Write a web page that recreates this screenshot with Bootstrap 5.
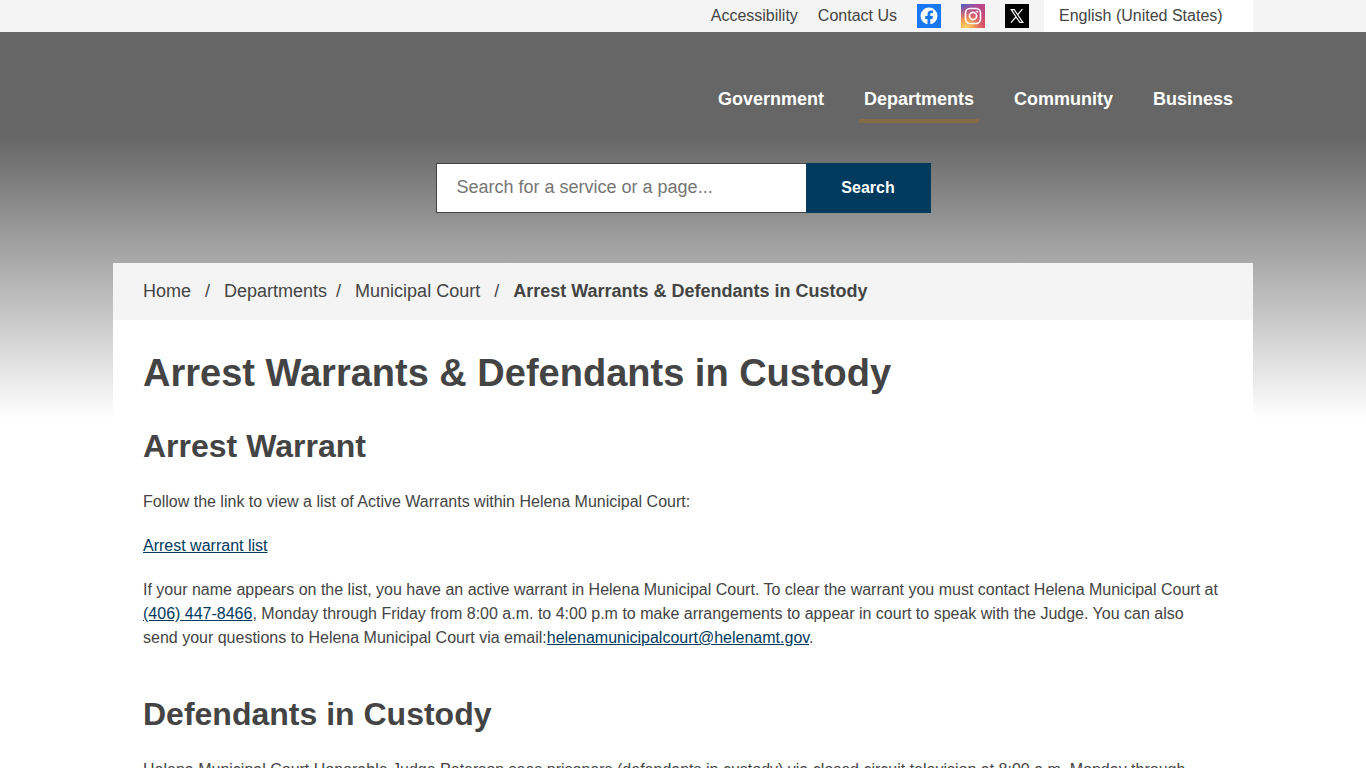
<!DOCTYPE html>
<html lang="en">
<head>
<meta charset="utf-8">
<meta name="viewport" content="width=device-width, initial-scale=1">
<title>Arrest Warrants &amp; Defendants in Custody</title>
<link href="https://cdn.jsdelivr.net/npm/bootstrap@5.3.0/dist/css/bootstrap.min.css" rel="stylesheet">
<style>
body { font-family: "Liberation Sans", Arial, sans-serif; color: #444; background: #fff linear-gradient(#666 137px, #fff 419px) no-repeat; }
.top-strip { background: #f4f4f4; }
.top-strip a { color: #444; }
.top-links { gap: 20px; margin-right: 15px; }
.top-strip svg { display: block; width: 24px; height: 24px; }
.lang-select { appearance: none; width: 209px; height: 32px; color: #444; padding: 0 15px; }
.main-nav .nav-link { color: #fff; font-size: 18px; line-height: 28px; padding: 6px 5px; border-bottom: 4px solid transparent; }
.main-nav .nav-link.active { border-color: #846b45; }
.main-nav { padding: 47px 15px 40px; gap: 30px; }
.site-search { max-width: 495px; height: 50px; }
.site-search .form-control { font-size: 18px; color: #444; padding: 0 20px 2px; border: 1px solid #444; }
.site-search .form-control::placeholder { color: #757575; }
.site-search .btn { width: 125px; background: #003a5d; color: #fff; }
.page-panel { margin-top: 50px; }
.crumbs { background: #f4f4f4; font-size: 18px; line-height: 27px; padding: 15px 30px; }
.crumbs a { color: #444; }
.crumbs .breadcrumb-item + .breadcrumb-item { padding-left: 14px; }
.crumbs .breadcrumb-item + .breadcrumb-item::before { color: #444; padding-right: 14px; }
.crumbs .breadcrumb-item.tight { padding-left: 9px; }
.article { padding: 30px 32px 0 30px; }
.article h1 { font-size: 38px; line-height: 46px; margin-bottom: 30px; }
.article h2 { font-size: 32px; line-height: 40px; margin-bottom: 24px; }
.article p { margin-bottom: 20px; }
.article p + h2 { margin-top: 44px; }
.article a { color: #003a5d; }
</style>
</head>
<body>
<header>
  <div class="top-strip">
    <div class="container p-0 d-flex justify-content-end align-items-center">
      <div class="top-links d-flex align-items-center">
        <a class="text-decoration-none" href="#">Accessibility</a>
        <a class="text-decoration-none" href="#">Contact Us</a>
        <a href="#" aria-label="Facebook">
          <svg viewBox="0 0 24 24"><path fill="#1877f2" d="M0 0h24v24H0z"/><circle cx="12" cy="12" r="8.500" fill="#fff"/><path fill="#1877f2" d="M10.500 21v-6.100H8.200v-2.800h2.300v-2c0-2.400 1.400-3.700 3.500-3.700 1 0 2 .2 2 .2V9h-1.200c-1.100 0-1.500.7-1.500 1.400v1.700h2.600l-.4 2.800h-2.200V21z"/></svg>
        </a>
        <a href="#" aria-label="Instagram">
          <svg viewBox="0 0 24 24"><defs><linearGradient id="ig-base" x1="0" y1="0" x2="1" y2="1"><stop offset="0" stop-color="#4d63c7"/><stop offset=".4" stop-color="#b34a91"/><stop offset="1" stop-color="#d54b68"/></linearGradient><radialGradient id="ig-warm" cx=".2" cy="1" r=".95"><stop offset="0" stop-color="#ffd968"/><stop offset=".35" stop-color="#f9a04c"/><stop offset="1" stop-color="#d84a65" stop-opacity="0"/></radialGradient></defs><path fill="url(#ig-base)" d="M0 0h24v24H0z"/><path fill="url(#ig-warm)" d="M0 0h24v24H0z"/><rect x="4.500" y="4.500" width="15" height="15" rx="4.500" fill="none" stroke="#fff" stroke-width="1.600"/><circle cx="12" cy="12" r="3.600" fill="none" stroke="#fff" stroke-width="1.600"/><circle cx="16.300" cy="7.700" r="1.100" fill="#fff"/></svg>
        </a>
        <a href="#" aria-label="X">
          <svg viewBox="0 0 24 24"><path d="M0 0h24v24H0z"/><path fill="none" stroke="#fff" stroke-width="1.200" d="M6.200 5.600h3l8.600 12.800h-3zM17.400 5.200l-4.900 5.700M11 12.900l-5 5.800"/></svg>
        </a>
      </div>
      <select class="lang-select border-0 rounded-0 bg-white" aria-label="Language"><option>English (United States)</option></select>
    </div>
  </div>
  <div class="container p-0">
    <nav class="nav main-nav justify-content-end fw-bold" aria-label="Main">
      <a class="nav-link" href="#">Government</a>
      <a class="nav-link active" aria-current="true" href="#">Departments</a>
      <a class="nav-link" href="#">Community</a>
      <a class="nav-link" href="#">Business</a>
    </nav>
    <form class="site-search d-flex mx-auto" role="search">
      <input class="form-control rounded-0 border-end-0" type="search" aria-label="Search" placeholder="Search for a service or a page...">
      <button class="btn rounded-0 border-0 fw-bold flex-shrink-0" type="button">Search</button>
    </form>
  </div>
</header>
<main class="container p-0 page-panel bg-white">
  <nav aria-label="Breadcrumb">
    <ol class="breadcrumb crumbs mb-0">
      <li class="breadcrumb-item"><a class="text-decoration-none" href="#">Home</a></li>
      <li class="breadcrumb-item"><a class="text-decoration-none" href="#">Departments</a></li>
      <li class="breadcrumb-item tight"><a class="text-decoration-none" href="#">Municipal Court</a></li>
      <li class="breadcrumb-item" aria-current="page"><strong>Arrest Warrants &amp; Defendants in Custody</strong></li>
    </ol>
  </nav>
  <article class="article">
    <h1 class="fw-bold">Arrest Warrants &amp; Defendants in Custody</h1>
    <h2 class="fw-bold">Arrest Warrant</h2>
    <p>Follow the link to view a list of Active Warrants within Helena Municipal Court:</p>
    <p><a href="#">Arrest warrant list</a></p>
    <p>If your name appears on the list, you have an active warrant in Helena Municipal Court. To clear the warrant you must contact Helena Municipal Court at <a href="#">(406) 447-8466</a>, Monday through Friday from 8:00 a.m. to 4:00 p.m to make arrangements to appear in court to speak with the Judge. You can also send your questions to Helena Municipal Court via email:<a href="#">helenamunicipalcourt@helenamt.gov</a>.</p>
    <h2 class="fw-bold">Defendants in Custody</h2>
    <p>Helena Municipal Court Honorable Judge Peterson sees prisoners (defendants in custody) via closed circuit television at 8:00 a.m. Monday through</p>
  </article>
</main>
<script src="https://cdn.jsdelivr.net/npm/bootstrap@5.3.0/dist/js/bootstrap.bundle.min.js"></script>
</body>
</html>
